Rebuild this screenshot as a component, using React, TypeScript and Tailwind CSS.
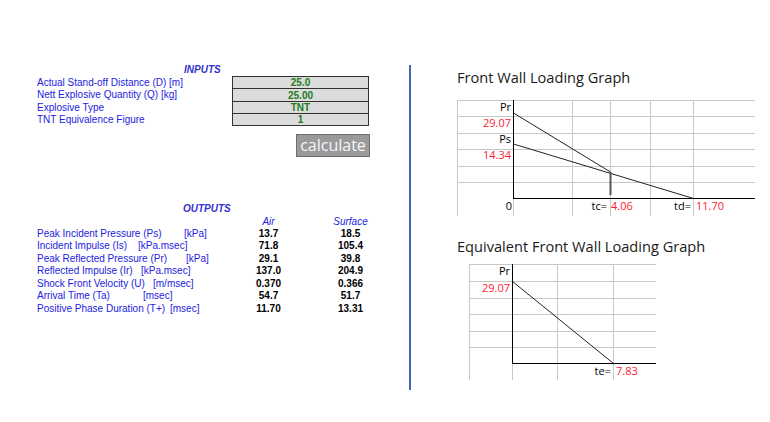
import React from "react";

const RED = "#ff2030";

function Chart1() {
  const hs = [0.5, 16.5, 33.5, 49.5, 66.5, 82.5];
  const vs = [0.5, 56.5, 115.5, 153.5, 193.5, 236.5];
  return (
    <svg width={300} height={117} className="block font-['Open_Sans',sans-serif] text-[11px]">
      {hs.map((y) => (
        <line key={"h" + y} x1={0} x2={298} y1={y} y2={y} stroke="#c8c8c8" />
      ))}
      {vs.map((x) => (
        <line key={"v" + x} x1={x} x2={x} y1={0} y2={116} stroke="#c8c8c8" />
      ))}
      <line x1={56.5} x2={56.5} y1={0} y2={98.5} stroke="#000" />
      <line x1={56} x2={298} y1={98.5} y2={98.5} stroke="#000" />
      <line x1={56.5} y1={13} x2={153.5} y2={72} stroke="#222" />
      <line x1={56.5} y1={44} x2={236.5} y2={98.5} stroke="#222" />
      <line x1={153.5} y1={72} x2={153.5} y2={95} stroke="#555" strokeWidth={2} />
      <text x={54} y={10.5} textAnchor="end" fill="#000">Pr</text>
      <text x={54} y={26.5} textAnchor="end" fill={RED}>29.07</text>
      <text x={54} y={43} textAnchor="end" fill="#000">Ps</text>
      <text x={54} y={59} textAnchor="end" fill={RED}>14.34</text>
      <text x={55} y={109.5} textAnchor="end" fill="#000">0</text>
      <text x={150} y={109.5} textAnchor="end" fill="#000">tc=</text>
      <text x={154} y={109.5} fill={RED}>4.06</text>
      <text x={234} y={109.5} textAnchor="end" fill="#000">td=</text>
      <text x={239} y={109.5} fill={RED}>11.70</text>
    </svg>
  );
}

function Chart2() {
  const hs = [0.5, 17.5, 34.5, 50.5, 67.5, 83.5];
  const vs = [0.5, 43.5, 88.5, 144.5];
  return (
    <svg width={190} height={117} className="block font-['Open_Sans',sans-serif] text-[11px]">
      {hs.map((y) => (
        <line key={"h" + y} x1={0} x2={187} y1={y} y2={y} stroke="#c8c8c8" />
      ))}
      {vs.map((x) => (
        <line key={"v" + x} x1={x} x2={x} y1={0} y2={116} stroke="#c8c8c8" />
      ))}
      <line x1={43.5} x2={43.5} y1={0} y2={99.5} stroke="#000" />
      <line x1={43} x2={187} y1={99.5} y2={99.5} stroke="#000" />
      <line x1={43.5} y1={17.5} x2={144.5} y2={99.5} stroke="#222" />
      <text x={41} y={11} textAnchor="end" fill="#000">Pr</text>
      <text x={41} y={27.5} textAnchor="end" fill={RED}>29.07</text>
      <text x={142} y={110.5} textAnchor="end" fill="#000">te=</text>
      <text x={147} y={110.5} fill={RED}>7.83</text>
    </svg>
  );
}

const inputs = [
  ["Actual Stand-off Distance (D) [m]", "25.0"],
  ["Nett Explosive Quantity (Q) [kg]", "25.00"],
  ["Explosive Type", "TNT"],
  ["TNT Equivalence Figure", "1"],
];

const outputs: { label: string; w: string; unit: string; air: string; surf: string }[] = [
  { label: "Peak Incident Pressure (Ps)", w: "w-[147px]", unit: "[kPa]", air: "13.7", surf: "18.5" },
  { label: "Incident Impulse (Is)", w: "w-[101px]", unit: "[kPa.msec]", air: "71.8", surf: "105.4" },
  { label: "Peak Reflected Pressure (Pr)", w: "w-[149px]", unit: "[kPa]", air: "29.1", surf: "39.8" },
  { label: "Reflected Impulse (Ir)", w: "w-[104px]", unit: "[kPa.msec]", air: "137.0", surf: "204.9" },
  { label: "Shock Front Velocity (U)", w: "w-[116px]", unit: "[m/msec]", air: "0.370", surf: "0.366" },
  { label: "Arrival Time (Ta)", w: "w-[106px]", unit: "[msec]", air: "54.7", surf: "51.7" },
  { label: "Positive Phase Duration (T+)", w: "w-[133px]", unit: "[msec]", air: "11.70", surf: "13.31" },
];

export default function App() {
  return (
    <div className="w-[770px] h-[422px] bg-white flex overflow-hidden font-['Liberation_Sans',Arial,sans-serif] text-[10px]">
      {/* Left column */}
      <div className="w-[409px] shrink-0 pl-[37px] pt-[63px] flex flex-col">
        <div className="h-[12.5px] leading-[14.5px] pl-[147px] font-bold italic text-[#3333d0]">INPUTS</div>
        <div className="flex flex-col">
          {inputs.map(([l, v], i) => (
            <div key={l} className="flex h-[12.5px]">
              <div className="w-[195px] leading-[14.5px] text-[#2222e0]">{l}</div>
              <div
                className={
                  "w-[137px] bg-[#dcdcdc] border-x border-t border-[#333] flex items-center justify-center font-bold text-[#217d1c] leading-none pt-[2px] " +
                  (i === inputs.length - 1 ? "border-b" : "")
                }
              >
                {v}
              </div>
            </div>
          ))}
        </div>
        <div className="mt-[8px] ml-[259px] w-[74px] h-[23px] bg-[#9a9a9a] border border-[#6e6e6e] flex items-center justify-center text-[#f6f6f6] font-['Open_Sans',sans-serif] text-[16px] leading-none pb-[1px]">
          calculate
        </div>
        <div className="mt-[45px] h-[12.5px] leading-[14.5px] pl-[146px] font-bold italic text-[#3333d0]">OUTPUTS</div>
        <div className="flex h-[12.5px] leading-[16.5px] italic text-[#2222e0]">
          <div className="w-[195px]" />
          <div className="w-[73px] text-center">Air</div>
          <div className="w-[91px] text-center">Surface</div>
        </div>
        {outputs.map((o) => (
          <div key={o.label} className="flex h-[12.5px] leading-[14.5px]">
            <div className="w-[195px] flex text-[#2222e0] whitespace-nowrap">
              <span className={o.w + " shrink-0"}>{o.label}</span>
              <span>{o.unit}</span>
            </div>
            <div className="w-[73px] text-center font-bold text-black">{o.air}</div>
            <div className="w-[91px] text-center font-bold text-black">{o.surf}</div>
          </div>
        ))}
      </div>

      {/* Divider */}
      <div className="w-[2px] h-[325px] mt-[65px] bg-[#4466b0] shrink-0" />

      {/* Right column */}
      <div className="pl-[46px] pt-[67px] flex flex-col font-['Open_Sans',sans-serif]">
        <div className="h-[20px] leading-[20px] text-[14.6px] text-[#1a1a1a] whitespace-nowrap">Front Wall Loading Graph</div>
        <div className="mt-[13px]">
          <Chart1 />
        </div>
        <div className="mt-[19px] h-[20px] leading-[20px] text-[14.6px] text-[#1a1a1a] whitespace-nowrap">
          Equivalent Front Wall Loading Graph
        </div>
        <div className="mt-[8px] ml-[12px]">
          <Chart2 />
        </div>
      </div>
    </div>
  );
}
